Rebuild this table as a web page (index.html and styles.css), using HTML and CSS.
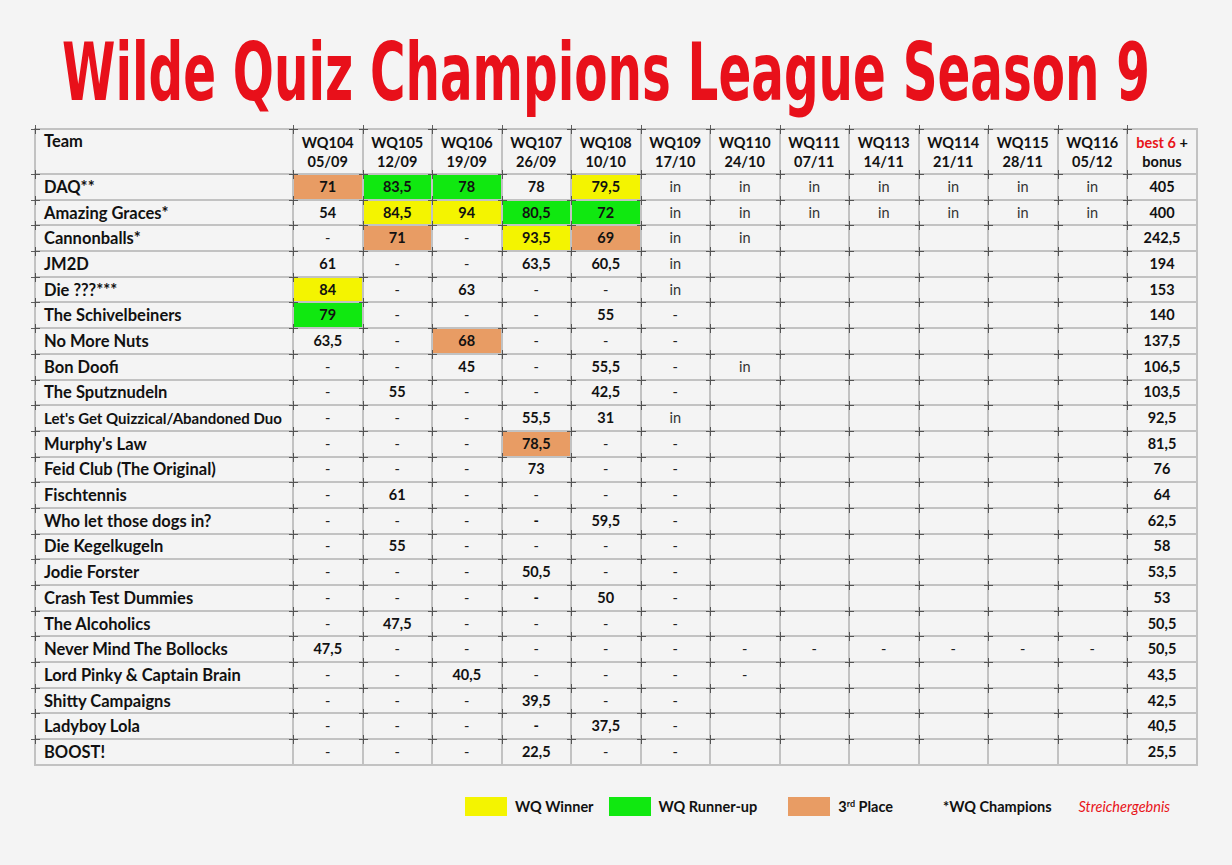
FILE: index.html
```html
<!DOCTYPE html>
<html lang="de">
<head>
<meta charset="utf-8">
<title>Wilde Quiz Champions League Season 9</title>
<link rel="stylesheet" href="styles.css">
</head>
<body>
<header class="title-wrap">
  <svg class="title" width="1232" height="126" viewBox="0 0 1232 126" xmlns="http://www.w3.org/2000/svg">
    <text class="title-text" x="62" y="67.6" transform="scale(1 1.48)" textLength="1088" lengthAdjust="spacingAndGlyphs">Wilde Quiz Champions League Season 9</text>
  </svg>
</header>

<main class="content">
<table class="league">
  <colgroup>
    <col class="c-team">
    <col class="c-wq"><col class="c-wq"><col class="c-wq"><col class="c-wq"><col class="c-wq"><col class="c-wq"><col class="c-wq"><col class="c-wq"><col class="c-wq"><col class="c-wq"><col class="c-wq"><col class="c-wq">
    <col class="c-tot">
  </colgroup>
  <thead>
    <tr>
      <th class="team">Team</th>
      <th>WQ104<br>05/09</th>
      <th>WQ105<br>12/09</th>
      <th>WQ106<br>19/09</th>
      <th>WQ107<br>26/09</th>
      <th>WQ108<br>10/10</th>
      <th>WQ109<br>17/10</th>
      <th>WQ110<br>24/10</th>
      <th>WQ111<br>07/11</th>
      <th>WQ113<br>14/11</th>
      <th>WQ114<br>21/11</th>
      <th>WQ115<br>28/11</th>
      <th>WQ116<br>05/12</th>
      <th><span class="red">best 6</span> +<br>bonus</th>
    </tr>
  </thead>
  <tbody>
    <tr><td class="team">DAQ**</td><td class="o">71</td><td class="g">83,5</td><td class="g">78</td><td>78</td><td class="y">79,5</td><td class="i">in</td><td class="i">in</td><td class="i">in</td><td class="i">in</td><td class="i">in</td><td class="i">in</td><td class="i">in</td><td>405</td></tr>
    <tr><td class="team">Amazing Graces*</td><td>54</td><td class="y">84,5</td><td class="y">94</td><td class="g">80,5</td><td class="g">72</td><td class="i">in</td><td class="i">in</td><td class="i">in</td><td class="i">in</td><td class="i">in</td><td class="i">in</td><td class="i">in</td><td>400</td></tr>
    <tr><td class="team">Cannonballs*</td><td class="d">-</td><td class="o">71</td><td class="d">-</td><td class="y">93,5</td><td class="o">69</td><td class="i">in</td><td class="i">in</td><td></td><td></td><td></td><td></td><td></td><td>242,5</td></tr>
    <tr><td class="team">JM2D</td><td>61</td><td class="d">-</td><td class="d">-</td><td>63,5</td><td>60,5</td><td class="i">in</td><td></td><td></td><td></td><td></td><td></td><td></td><td>194</td></tr>
    <tr><td class="team">Die ???***</td><td class="y">84</td><td class="d">-</td><td>63</td><td class="d">-</td><td class="d">-</td><td class="i">in</td><td></td><td></td><td></td><td></td><td></td><td></td><td>153</td></tr>
    <tr><td class="team">The Schivelbeiners</td><td class="g">79</td><td class="d">-</td><td class="d">-</td><td class="d">-</td><td>55</td><td class="d">-</td><td></td><td></td><td></td><td></td><td></td><td></td><td>140</td></tr>
    <tr><td class="team">No More Nuts</td><td>63,5</td><td class="d">-</td><td class="o">68</td><td class="d">-</td><td class="d">-</td><td class="d">-</td><td></td><td></td><td></td><td></td><td></td><td></td><td>137,5</td></tr>
    <tr><td class="team">Bon Doofi</td><td class="d">-</td><td class="d">-</td><td>45</td><td class="d">-</td><td>55,5</td><td class="d">-</td><td class="i">in</td><td></td><td></td><td></td><td></td><td></td><td>106,5</td></tr>
    <tr><td class="team">The Sputznudeln</td><td class="d">-</td><td>55</td><td class="d">-</td><td class="d">-</td><td>42,5</td><td class="d">-</td><td></td><td></td><td></td><td></td><td></td><td></td><td>103,5</td></tr>
    <tr><td class="team small">Let's Get Quizzical/Abandoned Duo</td><td class="d">-</td><td class="d">-</td><td class="d">-</td><td>55,5</td><td>31</td><td class="i">in</td><td></td><td></td><td></td><td></td><td></td><td></td><td>92,5</td></tr>
    <tr><td class="team">Murphy's Law</td><td class="d">-</td><td class="d">-</td><td class="d">-</td><td class="o">78,5</td><td class="d">-</td><td class="d">-</td><td></td><td></td><td></td><td></td><td></td><td></td><td>81,5</td></tr>
    <tr><td class="team">Feid Club (The Original)</td><td class="d">-</td><td class="d">-</td><td class="d">-</td><td>73</td><td class="d">-</td><td class="d">-</td><td></td><td></td><td></td><td></td><td></td><td></td><td>76</td></tr>
    <tr><td class="team">Fischtennis</td><td class="d">-</td><td>61</td><td class="d">-</td><td class="d">-</td><td class="d">-</td><td class="d">-</td><td></td><td></td><td></td><td></td><td></td><td></td><td>64</td></tr>
    <tr><td class="team">Who let those dogs in?</td><td class="d">-</td><td class="d">-</td><td class="d">-</td><td>-</td><td>59,5</td><td class="d">-</td><td></td><td></td><td></td><td></td><td></td><td></td><td>62,5</td></tr>
    <tr><td class="team">Die Kegelkugeln</td><td class="d">-</td><td>55</td><td class="d">-</td><td class="d">-</td><td class="d">-</td><td class="d">-</td><td></td><td></td><td></td><td></td><td></td><td></td><td>58</td></tr>
    <tr><td class="team">Jodie Forster</td><td class="d">-</td><td class="d">-</td><td class="d">-</td><td>50,5</td><td class="d">-</td><td class="d">-</td><td></td><td></td><td></td><td></td><td></td><td></td><td>53,5</td></tr>
    <tr><td class="team">Crash Test Dummies</td><td class="d">-</td><td class="d">-</td><td class="d">-</td><td>-</td><td>50</td><td class="d">-</td><td></td><td></td><td></td><td></td><td></td><td></td><td>53</td></tr>
    <tr><td class="team">The Alcoholics</td><td class="d">-</td><td>47,5</td><td class="d">-</td><td class="d">-</td><td class="d">-</td><td class="d">-</td><td></td><td></td><td></td><td></td><td></td><td></td><td>50,5</td></tr>
    <tr><td class="team">Never Mind The Bollocks</td><td>47,5</td><td class="d">-</td><td class="d">-</td><td class="d">-</td><td class="d">-</td><td class="d">-</td><td class="d">-</td><td class="d">-</td><td class="d">-</td><td class="d">-</td><td class="d">-</td><td class="d">-</td><td>50,5</td></tr>
    <tr><td class="team">Lord Pinky &amp; Captain Brain</td><td class="d">-</td><td class="d">-</td><td>40,5</td><td class="d">-</td><td class="d">-</td><td class="d">-</td><td class="d">-</td><td></td><td></td><td></td><td></td><td></td><td>43,5</td></tr>
    <tr><td class="team">Shitty Campaigns</td><td class="d">-</td><td class="d">-</td><td class="d">-</td><td>39,5</td><td class="d">-</td><td class="d">-</td><td></td><td></td><td></td><td></td><td></td><td></td><td>42,5</td></tr>
    <tr><td class="team">Ladyboy Lola</td><td class="d">-</td><td class="d">-</td><td class="d">-</td><td>-</td><td>37,5</td><td class="d">-</td><td></td><td></td><td></td><td></td><td></td><td></td><td>40,5</td></tr>
    <tr><td class="team">BOOST!</td><td class="d">-</td><td class="d">-</td><td class="d">-</td><td>22,5</td><td class="d">-</td><td class="d">-</td><td></td><td></td><td></td><td></td><td></td><td></td><td>25,5</td></tr>
  </tbody>
</table>

<footer class="legend">
  <div class="legend-item"><span class="swatch sw-y"></span><span>WQ Winner</span></div>
  <div class="legend-item i2"><span class="swatch sw-g"></span><span>WQ Runner-up</span></div>
  <div class="legend-item i3"><span class="swatch sw-o"></span><span>3<sup>rd</sup> Place</span></div>
  <div class="legend-item champ"><span>*WQ Champions</span></div>
  <div class="legend-item streich"><span>Streichergebnis</span></div>
</footer>
</main>
</body>
</html>
```

FILE: styles.css
```css
html, body {
  margin: 0;
  padding: 0;
}

body {
  background: #f4f4f4;
  font-family: Lato, "Open Sans", "Liberation Sans", sans-serif;
  color: #111;
  width: 1232px;
  height: 865px;
  overflow: hidden;
}

.title-wrap {
  height: 128px;
}

.title {
  display: block;
}

.title-text {
  font-family: "DejaVu Sans Condensed", "DejaVu Sans", sans-serif;
  font-weight: bold;
  font-size: 54px;
  fill: #e8101a;
}

.content {
  display: flex;
  flex-direction: column;
  align-items: center;
}

.league {
  border-collapse: collapse;
  table-layout: fixed;
  width: 1161px;
}

.c-team { width: 258px; }
.c-wq { width: 69.5px; }
.c-tot { width: 70px; }

.league th,
.league td {
  border: 2px solid #c2c2c2;
  padding: 0;
  text-align: center;
  font-weight: 700;
  font-size: 14.5px;
  position: relative;
}

.league th::before,
.league td::before {
  content: "";
  position: absolute;
  left: -5px;
  top: -5px;
  width: 9px;
  height: 9px;
  background:
    linear-gradient(#3a3a3a, #3a3a3a) center / 1px 9px no-repeat,
    linear-gradient(#3a3a3a, #3a3a3a) center / 9px 1px no-repeat;
  opacity: 0.8;
}

.league th {
  height: 41px;
  line-height: 19px;
  vertical-align: middle;
  padding-top: 1px;
}

.league th.team {
  vertical-align: top;
  padding-top: 2px;
}

.league td {
  height: 23.7px;
  line-height: 18px;
}

.league .team {
  text-align: left;
  padding-left: 8px;
  font-size: 16.5px;
}

.league td.small {
  font-size: 15px;
}

.red {
  color: #e8141a;
}

.league td.d {
  font-weight: 400;
  color: #222;
}

.league td.i {
  font-weight: 400;
  color: #333;
}

.league td.y { background: #f4f400; }
.league td.g { background: #10e810; }
.league td.o { background: #e89c64; }

.legend {
  align-self: flex-start;
  display: flex;
  align-items: center;
  margin-top: 31px;
  margin-left: 465px;
  font-weight: 700;
  font-size: 14.5px;
  height: 19px;
}

.legend-item {
  display: flex;
  align-items: center;
  gap: 8px;
}

.swatch {
  display: block;
  width: 42px;
  height: 19px;
}

.sw-y { background: #f4f400; }
.sw-g { background: #10e810; }
.sw-o { background: #e89c64; }

.legend-item.i2 { margin-left: 15px; }
.legend-item.i3 { margin-left: 31px; }
.legend-item.champ { margin-left: 50px; }
.legend-item.streich { margin-left: 27px; }

.legend sup {
  font-size: 9px;
  vertical-align: 5px;
  line-height: 0;
}

.streich {
  color: #e8141a;
  font-style: italic;
  font-weight: 400;
}
```
